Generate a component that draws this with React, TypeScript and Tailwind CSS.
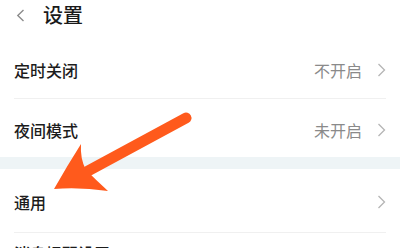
import React from 'react';

const font = { fontFamily: '"Noto Sans CJK SC", "Noto Sans", sans-serif' };

function Chevron() {
  return (
    <svg width="9" height="14" viewBox="0 0 9 14" className="shrink-0">
      <path d="M1.5 1 L7.5 7 L1.5 13" fill="none" stroke="#b5b5b5" strokeWidth="1.3" />
    </svg>
  );
}

function Row({ label, value, className = '' }: { label: string; value?: string; className?: string }) {
  return (
    <div className={`flex items-center justify-between px-[14px] ${className}`}>
      <span className="text-[16px] leading-none font-medium text-[#1c1c1c]">{label}</span>
      <div className="flex items-center gap-[15px]">
        {value && <span className="text-[16px] leading-none text-[#8a8a8a]">{value}</span>}
        <Chevron />
      </div>
    </div>
  );
}

export default function App() {
  return (
    <div className="relative w-[400px] h-[248px] overflow-hidden bg-white" style={font}>
      <div className="flex h-[41px] items-center pl-[16px]">
        <svg width="9" height="13" viewBox="0 0 9 13" className="mb-[10px]">
          <path d="M7.5 1 L1.8 6.5 L7.5 12" fill="none" stroke="#8c8c8c" strokeWidth="1.4" />
        </svg>
        <span className="ml-[18px] mb-[11px] text-[20px] leading-none font-medium text-[#1a1a1a]">设置</span>
      </div>

      <Row label="定时关闭" value="不开启" className="h-[57px]" />
      <div className="mx-[14px] border-t border-[#f0f0f0]" />
      <Row label="夜间模式" value="未开启" className="h-[58px] pt-[3px]" />
      <div className="h-[12px] bg-[#eef4f6]" />
      <Row label="通用" className="h-[63px] pt-[3px]" />
      <div className="mx-[14px] border-t border-[#f0f0f0]" />
      <div className="px-[14px] pt-[8px]">
        <span className="text-[16px] leading-none font-medium text-[#1c1c1c]">消息提醒设置</span>
      </div>

      <svg className="absolute left-0 top-0" width="400" height="248" viewBox="0 0 400 248">
        <line x1="186" y1="118" x2="88" y2="171" stroke="#ff5a1c" strokeWidth="11" strokeLinecap="round" />
        <path
          d="M54 189 Q67 166 81 144 Q80 159 86 170 Q96 180 108 191 Q80 187 54 189 Z"
          fill="#ff5a1c"
        />
      </svg>
    </div>
  );
}
